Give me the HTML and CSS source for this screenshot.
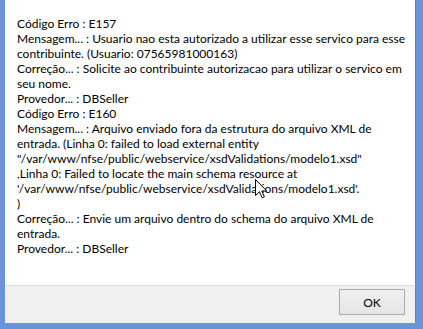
FILE: index.html
```html
<!DOCTYPE html>
<html lang="pt">
<head>
<meta charset="utf-8">
<link rel="stylesheet" href="styles.css">
</head>
<body>
<div class="window">
  <div class="content">
    <div class="msg">Código Erro : E157<br>Mensagem... : Usuario nao esta autorizado a utilizar esse servico para esse<br>contribuinte. (Usuario: 07565981000163)<br>Correção... : Solicite ao contribuinte autorizacao para utilizar o servico em<br>seu nome.<br>Provedor... : DBSeller<br>Código Erro : E160<br>Mensagem... : Arquivo enviado fora da estrutura do arquivo XML de<br>entrada. (Linha 0: failed to load external entity<br>"/var/www/nfse/public/webservice/xsdValidations/modelo1.xsd"<br>,Linha 0: Failed to locate the main schema resource at<br>'/var/www/nfse/public/webservice/xsdValidations/modelo1.xsd'.<br>)<br>Correção... : Envie um arquivo dentro do schema do arquivo XML de<br>entrada.<br>Provedor... : DBSeller</div>
    <svg class="cursor" width="13" height="20" viewBox="0 0 13 20">
      <path d="M0.5 0.5 L0.5 16.5 L4.5 12.8 L7.2 18.8 L9.4 17.8 L6.8 12 L11.8 12 Z" fill="#fff" stroke="#000" stroke-width="1" stroke-linejoin="miter"/>
    </svg>
  </div>
  <div class="footer">
    <button class="ok">OK</button>
  </div>
</div>
</body>
</html>
```
FILE: styles.css
```css
html, body {
  margin: 0;
  padding: 0;
  background: #ffffff;
}
.window {
  width: 423px;
  height: 329px;
  box-sizing: border-box;
  display: flex;
  flex-direction: column;
  border-left: 5px solid #6b94d8;
  border-right: 7px solid #6b94d8;
  border-bottom: 6px solid #6b94d8;
  background: #ffffff;
  font-family: "Segoe UI", Lato, "Open Sans", sans-serif;
  font-size: 12px;
  color: #000;
}
.content {
  flex: 1;
  position: relative;
  padding: 16px 0 0 12px;
  border-right: 1px solid #5b80c4;
}
.msg {
  line-height: 15px;
  white-space: nowrap;
}
.cursor {
  position: absolute;
  left: 250px;
  top: 179px;
}
.footer {
  flex: none;
  background: #f0f0f0;
  border-top: 1px solid #dfdfdf;
  border-right: 1px solid #5b80c4;
  display: flex;
  justify-content: flex-end;
  align-items: flex-start;
  padding: 3px 10px 0 0;
  box-sizing: border-box;
  height: 38px;
}
.ok {
  width: 66px;
  height: 26px;
  box-sizing: border-box;
  border: 1px solid #acacac;
  background: linear-gradient(#f0f0f0, #e5e5e5);
  font-family: "Segoe UI", Lato, "Open Sans", sans-serif;
  font-size: 12px;
  color: #000;
  padding: 0;
}
```
